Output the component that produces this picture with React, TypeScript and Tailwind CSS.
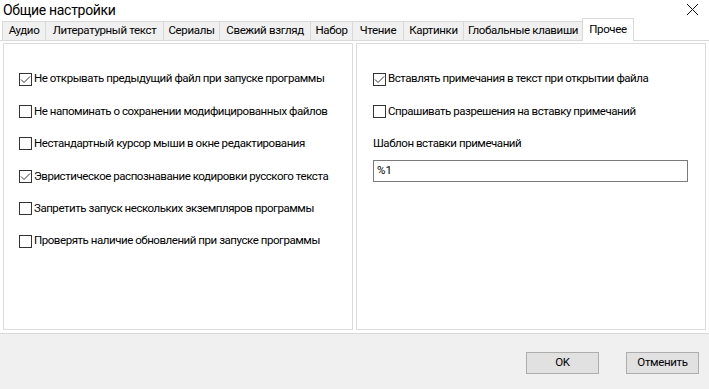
import React from "react";

const font = { fontFamily: 'Roboto, "Liberation Sans", sans-serif' };

function Check({ checked }: { checked?: boolean }) {
  return (
    <span className="w-[13px] h-[13px] border border-[#333333] bg-white flex items-center justify-center shrink-0">
      {checked && (
        <svg width="11" height="11" viewBox="0 0 11 11">
          <polyline points="1,5.5 4,8.5 10,2.5" fill="none" stroke="#333333" strokeWidth="1" />
        </svg>
      )}
    </span>
  );
}

function Row({ checked, label }: { checked?: boolean; label: string }) {
  return (
    <div className="h-[32.4px] flex items-center gap-[2px]">
      <Check checked={checked} />
      <span className="text-[11.5px] tracking-[-0.45px] text-black leading-none whitespace-nowrap">{label}</span>
    </div>
  );
}

const tabs = [
  { t: "Аудио", w: 43 },
  { t: "Литературный текст", w: 118 },
  { t: "Сериалы", w: 56 },
  { t: "Свежий взгляд", w: 91 },
  { t: "Набор", w: 42 },
  { t: "Чтение", w: 51 },
  { t: "Картинки", w: 60 },
  { t: "Глобальные клавиши", w: 119 },
];

export default function App() {
  return (
    <div className="w-[709px] h-[389px] bg-white flex flex-col overflow-hidden" style={font}>
      <div className="h-[21px] flex items-start justify-between pl-[3px] pr-[10px] pt-[1px]">
        <span className="text-[14px] tracking-[-0.3px] leading-[19px] text-black">Общие настройки</span>
        <svg width="13" height="13" viewBox="0 0 13 13" className="mt-[2px]">
          <path d="M1 1 L12 12 M12 1 L1 12" stroke="#111" strokeWidth="1" />
        </svg>
      </div>
      <div className="h-[20px] flex items-end pl-[2px] border-b border-[#d9d9d9] relative">
        {tabs.map((x) => (
          <div
            key={x.t}
            style={{ width: x.w }}
            className="h-[19px] bg-[#f0f0f0] border-t border-l border-[#d9d9d9] flex items-center justify-center text-[11.5px] tracking-[-0.35px] text-black whitespace-nowrap"
          >
            {x.t}
          </div>
        ))}
        <div className="w-[52px] h-[23px] -mb-[1px] bg-white border-t border-l border-r border-[#d9d9d9] flex items-start justify-center pt-[2px] text-[11.5px] tracking-[-0.35px] text-black">
          Прочее
        </div>
      </div>
      <div className="h-[293px] flex gap-[3px] px-[3px] pt-[2px] pb-[3px] border-b border-[#d9d9d9]">
        <div className="w-[350px] border border-[#dcdcdc] pl-[15px] pt-[19px] overflow-hidden">
          <Row checked label="Не открывать предыдущий файл при запуске программы" />
          <Row label="Не напоминать о сохранении модифицированных файлов" />
          <Row label="Нестандартный курсор мыши в окне редактирования" />
          <Row checked label="Эвристическое распознавание кодировки русского текста" />
          <Row label="Запретить запуск нескольких экземпляров программы" />
          <Row label="Проверять наличие обновлений при запуске программы" />
        </div>
        <div className="w-[350px] border border-[#dcdcdc] pl-[16px] pt-[19px] flex flex-col overflow-hidden">
          <Row checked label="Вставлять примечания в текст при открытии файла" />
          <Row label="Спрашивать разрешения на вставку примечаний" />
          <div className="h-[32px] flex items-center text-[11.5px] tracking-[-0.45px] text-black">Шаблон вставки примечаний</div>
          <div className="w-[315px] h-[22px] border border-[#7a7a7a] flex items-center pl-[3px] text-[11.5px] text-black">
            %1
          </div>
        </div>
      </div>
      <div className="flex-1 bg-[#f0f0f0] flex justify-end items-start pt-[18px] pr-[10px] gap-[27px]">
        <button className="w-[73px] h-[22px] bg-[#e1e1e1] border border-[#adadad] text-[11.5px] tracking-[-0.35px] text-black">OK</button>
        <button className="w-[73px] h-[22px] bg-[#e1e1e1] border border-[#adadad] text-[11.5px] tracking-[-0.35px] text-black">Отменить</button>
      </div>
    </div>
  );
}
